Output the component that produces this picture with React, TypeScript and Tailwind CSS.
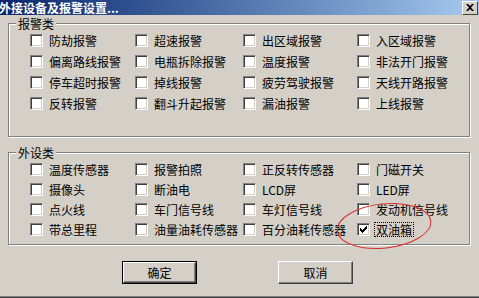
import React from 'react'

const ALARMS = [
  ['防劫报警', '超速报警', '出区域报警', '入区域报警'],
  ['偏离路线报警', '电瓶拆除报警', '温度报警', '非法开门报警'],
  ['停车超时报警', '掉线报警', '疲劳驾驶报警', '天线开路报警'],
  ['反转报警', '翻斗升起报警', '漏油报警', '上线报警'],
]

const DEVICES = [
  ['温度传感器', '报警拍照', '正反转传感器', '门磁开关'],
  ['摄像头', '断油电', 'LCD屏', 'LED屏'],
  ['点火线', '车门信号线', '车灯信号线', '发动机信号线'],
  ['带总里程', '油量油耗传感器', '百分油耗传感器', '双油箱'],
]

function Check({ label, checked, focus }: { label: string; checked?: boolean; focus?: boolean }) {
  return (
    <div className="flex items-center h-full">
      <div className="w-[13px] h-[13px] shrink-0 bg-white border border-t-[#808080] border-l-[#808080] border-r-white border-b-white shadow-[inset_1px_1px_0_#404040,inset_-1px_-1px_0_#d4d0c8] flex items-center justify-center">
        {checked && (
          <svg width="7" height="7" viewBox="0 0 7 7" shapeRendering="crispEdges">
            <path d="M6 0h1v3H6v1H5v1H4v1H3v1H2V6H1V5H0V2h1v1h1v1h1V3h1V2h1V1h1z" fill="#000" />
          </svg>
        )}
      </div>
      <span className={`ml-[4px] text-[12px] leading-[13px] whitespace-nowrap ${focus ? 'border border-dotted border-black px-[1px]' : 'px-[2px]'}`}>
        {label}
      </span>
    </div>
  )
}

function Group({ title, rows, rowH, height }: { title: string; rows: string[][]; rowH: string; height: string }) {
  return (
    <div className={`relative mx-[8px] w-[462px] ${height} border border-[#808080] shadow-[inset_1px_1px_0_#fff,1px_1px_0_#fff]`}>
      <span className="absolute -top-[7px] left-[7px] bg-[#d4d0c8] px-[2px] text-[12px] leading-[13px]">{title}</span>
      <div className="pt-[6px] pl-[21px] grid grid-cols-[105px_108px_114px_1fr]">
        {rows.flatMap((r, ri) =>
          r.map((label, ci) => (
            <div key={`${ri}-${ci}`} className={rowH}>
              <Check label={label} checked={label === '双油箱'} focus={label === '双油箱'} />
            </div>
          ))
        )}
      </div>
    </div>
  )
}

function Btn({ label, def }: { label: string; def?: boolean }) {
  return (
    <div className={`w-[75px] h-[23px] ${def ? 'border border-black' : ''}`}>
      <div className="w-full h-full bg-[#d4d0c8] border border-t-white border-l-white border-r-[#404040] border-b-[#404040] shadow-[inset_-1px_-1px_0_#808080] flex items-center justify-center text-[12px]">
        {label}
      </div>
    </div>
  )
}

export default function App() {
  return (
    <div
      className="relative w-[479px] h-[298px] overflow-hidden bg-[#d4d0c8] text-black border-b border-b-[#404040] shadow-[inset_0_-1px_0_#808080]"
      style={{ fontFamily: '"Noto Sans CJK SC", "Noto Sans", sans-serif' }}
    >
      <div className="h-[15px] flex items-center justify-between bg-gradient-to-r from-[#0a246a] to-[#a6caf0]">
        <span className="text-white font-bold text-[12px] leading-[13px] -ml-[1px]">外接设备及报警设置...</span>
        <div className="w-[16px] h-[14px] mr-[1px] bg-[#d4d0c8] border border-t-white border-l-white border-r-[#404040] border-b-[#404040] flex items-center justify-center">
          <svg width="8" height="7" viewBox="0 0 8 7">
            <path d="M0 0h2l2 2 2-2h2L5 3.5 8 7H6L4 5 2 7H0l3-3.5z" fill="#000" />
          </svg>
        </div>
      </div>

      <div className="mt-[8px]">
        <Group title="报警类" rows={ALARMS} rowH="h-[21px]" height="h-[114px]" />
      </div>
      <div className="mt-[15px]">
        <Group title="外设类" rows={DEVICES} rowH="h-[20px]" height="h-[93px]" />
      </div>

      <div className="mt-[16px] flex pl-[122px] gap-[81px]">
        <Btn label="确定" def />
        <Btn label="取消" />
      </div>

      <svg className="absolute left-0 top-0 pointer-events-none" width="479" height="298">
        <ellipse cx="384" cy="226" rx="47" ry="22" transform="rotate(-6 384 226)" fill="none" stroke="#d83030" strokeWidth="1" />
      </svg>
    </div>
  )
}
